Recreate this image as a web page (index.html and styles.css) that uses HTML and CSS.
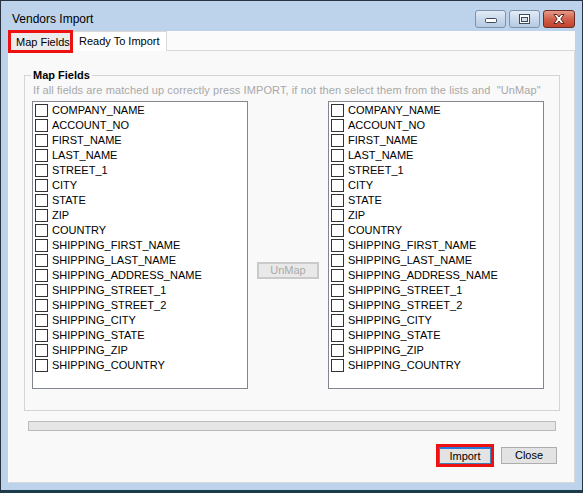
FILE: index.html
```html
<!DOCTYPE html>
<html>
<head>
<meta charset="utf-8">
<link rel="stylesheet" href="styles.css">
</head>
<body>
<div class="window">
  <div class="titlebar">
    <span class="title">Vendors Import</span>
    <div class="caption-btns">
      <div class="cbtn cbtn-min">
        <svg width="31" height="18" viewBox="0 0 31 18">
          <rect x="10.5" y="8.5" width="11" height="4" rx="1" fill="#fff" stroke="#3b4a5c"/>
        </svg>
      </div>
      <div class="cbtn cbtn-max">
        <svg width="31" height="18" viewBox="0 0 31 18">
          <rect x="10.5" y="4.5" width="10" height="9" fill="#fff" stroke="#3b4a5c"/>
          <rect x="12.5" y="7.5" width="6" height="4" fill="#cfdceb" stroke="#3b4a5c"/>
        </svg>
      </div>
      <div class="cbtn cbtn-close">
        <svg width="32" height="18" viewBox="0 0 32 18">
          <path d="M11 4.5 L14 4.5 L16 7 L18 4.5 L21 4.5 L17.8 9 L21 13.5 L18 13.5 L16 11 L14 13.5 L11 13.5 L14.2 9 Z" fill="#fff" stroke="#4a1a12" stroke-width="0.9" stroke-linejoin="round"/>
        </svg>
      </div>
    </div>
  </div>
  <div class="client">
    <div class="tabs">
      <div class="tab tab-map">Map Fields</div>
      <div class="tab tab-ready">Ready To Import</div>
    </div>
    <div class="panel">
      <fieldset class="group">
        <legend class="legend">Map Fields</legend>
        <p class="hint">If all fields are matched up correctly press IMPORT, if not then select them from the lists and &nbsp;"UnMap"</p>
        <div class="lists">
          <div class="list">
            <div class="item"><span class="chk"></span>COMPANY_NAME</div>
            <div class="item"><span class="chk"></span>ACCOUNT_NO</div>
            <div class="item"><span class="chk"></span>FIRST_NAME</div>
            <div class="item"><span class="chk"></span>LAST_NAME</div>
            <div class="item"><span class="chk"></span>STREET_1</div>
            <div class="item"><span class="chk"></span>CITY</div>
            <div class="item"><span class="chk"></span>STATE</div>
            <div class="item"><span class="chk"></span>ZIP</div>
            <div class="item"><span class="chk"></span>COUNTRY</div>
            <div class="item"><span class="chk"></span>SHIPPING_FIRST_NAME</div>
            <div class="item"><span class="chk"></span>SHIPPING_LAST_NAME</div>
            <div class="item"><span class="chk"></span>SHIPPING_ADDRESS_NAME</div>
            <div class="item"><span class="chk"></span>SHIPPING_STREET_1</div>
            <div class="item"><span class="chk"></span>SHIPPING_STREET_2</div>
            <div class="item"><span class="chk"></span>SHIPPING_CITY</div>
            <div class="item"><span class="chk"></span>SHIPPING_STATE</div>
            <div class="item"><span class="chk"></span>SHIPPING_ZIP</div>
            <div class="item"><span class="chk"></span>SHIPPING_COUNTRY</div>
          </div>
          <div class="middle">
            <button class="unmap" disabled>UnMap</button>
          </div>
          <div class="list">
            <div class="item"><span class="chk"></span>COMPANY_NAME</div>
            <div class="item"><span class="chk"></span>ACCOUNT_NO</div>
            <div class="item"><span class="chk"></span>FIRST_NAME</div>
            <div class="item"><span class="chk"></span>LAST_NAME</div>
            <div class="item"><span class="chk"></span>STREET_1</div>
            <div class="item"><span class="chk"></span>CITY</div>
            <div class="item"><span class="chk"></span>STATE</div>
            <div class="item"><span class="chk"></span>ZIP</div>
            <div class="item"><span class="chk"></span>COUNTRY</div>
            <div class="item"><span class="chk"></span>SHIPPING_FIRST_NAME</div>
            <div class="item"><span class="chk"></span>SHIPPING_LAST_NAME</div>
            <div class="item"><span class="chk"></span>SHIPPING_ADDRESS_NAME</div>
            <div class="item"><span class="chk"></span>SHIPPING_STREET_1</div>
            <div class="item"><span class="chk"></span>SHIPPING_STREET_2</div>
            <div class="item"><span class="chk"></span>SHIPPING_CITY</div>
            <div class="item"><span class="chk"></span>SHIPPING_STATE</div>
            <div class="item"><span class="chk"></span>SHIPPING_ZIP</div>
            <div class="item"><span class="chk"></span>SHIPPING_COUNTRY</div>
          </div>
        </div>
      </fieldset>
      <div class="progress"></div>
      <div class="actions">
        <div class="highlight"><button class="btn btn-import">Import</button></div>
        <button class="btn btn-close">Close</button>
      </div>
    </div>
  </div>
</div>
</body>
</html>
```

FILE: styles.css
```css
* { box-sizing: border-box; }
html, body { margin: 0; padding: 0; }
body {
  width: 583px;
  height: 493px;
  overflow: hidden;
  font-family: "Liberation Sans", Arial, sans-serif;
  font-size: 11px;
  color: #000;
  background: #fff;
}
.window {
  width: 583px;
  height: 493px;
  background: #bcd3eb;
  border: 1px solid #2a3440;
  border-bottom: 3px solid #1c3c4c;
  display: flex;
  flex-direction: column;
}
.titlebar {
  height: 30px;
  flex: none;
  display: flex;
  align-items: flex-start;
  justify-content: space-between;
}
.title {
  font-size: 12px;
  line-height: 15px;
  margin: 11px 0 0 11px;
  color: #000;
}
.caption-btns {
  display: flex;
  margin: 9px 7px 0 0;
  gap: 3px;
}
.cbtn {
  height: 18px;
  width: 31px;
  border: 1px solid #7d93ab;
  border-radius: 3px;
  background: linear-gradient(#e2ecf7, #c9d9ea 50%, #b5cbe2);
  overflow: hidden;
}
.cbtn svg { display: block; margin: -1px; }
.cbtn-close {
  width: 32px;
  border-color: #6b2b22;
  background: linear-gradient(#e49a88, #d0614b 50%, #c0422c);
}
.client {
  flex: 1;
  margin: 0 7px 7px 7px;
  background: #fbfbfb;
  display: flex;
  flex-direction: column;
}
.tabs {
  height: 19px;
  flex: none;
  display: flex;
  align-items: flex-start;
}
.tab {
  position: relative;
  z-index: 2;
  line-height: 13px;
  white-space: nowrap;
}
.tab-map {
  width: 65px;
  height: 23px;
  margin-top: -1px;
  border: 3px solid #ee1111;
  background: #ececec;
  padding: 3px 0 0 5px;
}
.tab-ready {
  width: 94px;
  height: 20px;
  background: #fff;
  border-top: 1px solid #d9d9d9;
  border-right: 1px solid #d9d9d9;
  padding: 3px 0 0 6px;
}
.panel {
  flex: 1;
  background: #f9f9f9;
  border: 1px solid #d9d9d9;
  border-left-color: #fdfdfd;
  display: flex;
  flex-direction: column;
}
.group {
  margin: 18px 14px 0 15px;
  width: 536px;
  border: 1px solid #d5d5d5;
  padding: 2px 14px 21px 7px;
  min-width: 0;
}
.legend {
  font-weight: bold;
  line-height: 13px;
  padding: 0 2px;
  margin-left: -1px;
}
.hint {
  margin: 0;
  line-height: 13px;
  color: #a8a8a8;
  white-space: nowrap;
  padding-left: 1px;
  letter-spacing: 0.1px;
}
.lists {
  margin-top: 4px;
  display: flex;
}
.list {
  width: 216px;
  height: 288px;
  background: #fff;
  border: 1px solid #82878f;
  padding: 2px 0 0 2px;
}
.item {
  height: 15px;
  display: flex;
  align-items: flex-start;
  line-height: 13px;
  white-space: nowrap;
}
.chk {
  width: 13px;
  height: 13px;
  border: 1px solid #333;
  background: #fff;
  margin-right: 4px;
  flex: none;
}
.middle {
  width: 80px;
  display: flex;
  justify-content: center;
  align-items: flex-start;
}
.unmap {
  margin-top: 161px;
  width: 62px;
  height: 17px;
  border: 2px solid #cacaca;
  background: #e9e9e9;
  color: #a9a9a9;
  font-family: inherit;
  font-size: 11px;
  line-height: 11px;
  padding: 0;
}
.progress {
  margin: 10px 0 0 19px;
  width: 528px;
  height: 10px;
  border: 1px solid #bcbcbc;
  background: #e6e6e6;
}
.actions {
  margin: 13px 17px 0 0;
  display: flex;
  justify-content: flex-end;
  align-items: center;
  gap: 7px;
}
.highlight {
  border: 3px solid #ee1111;
  display: flex;
}
.btn {
  height: 17px;
  font-family: inherit;
  font-size: 11px;
  line-height: 11px;
  padding: 0;
  color: #000;
  background: #e3e3e3;
  border: 1px solid #adadad;
}
.btn-import {
  width: 52px;
  border-color: #3c7fb1;
  border-top: 2px solid #2a78d8;
}
.btn-close {
  width: 56px;
}
```
